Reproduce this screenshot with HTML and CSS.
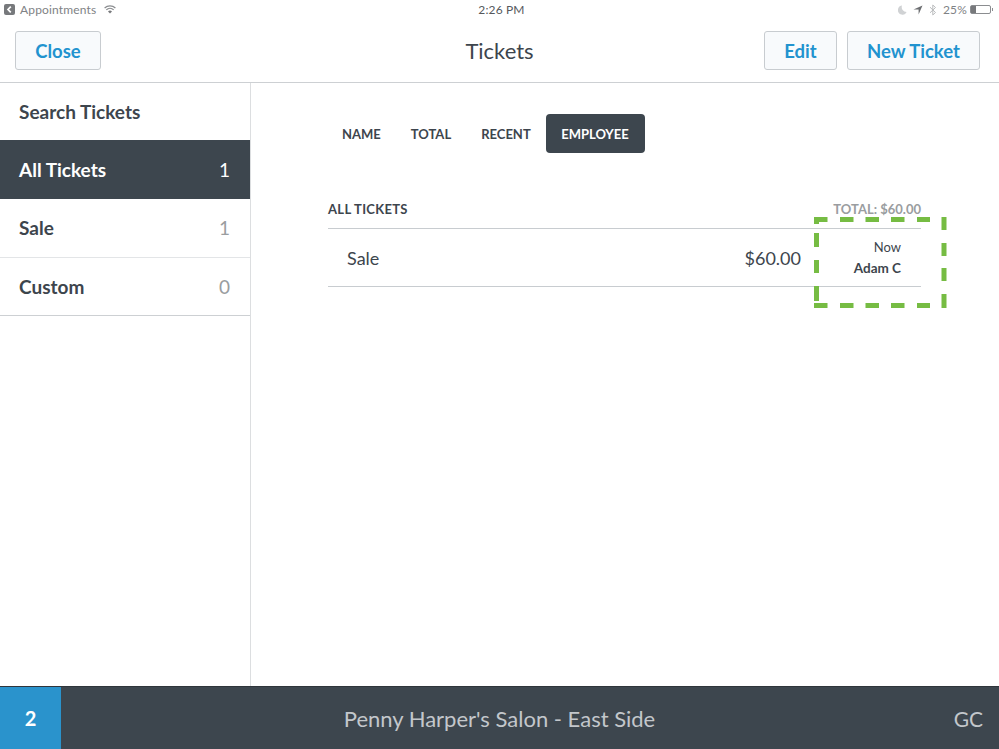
FILE: index.html

```html
<!DOCTYPE html>
<html lang="en">
<head>
<meta charset="UTF-8" />
<title>Tickets</title>
<link rel="stylesheet" href="styles.css">
</head>
<body>
<div class="app">

  <div class="status">
    <div class="status-left">
      <svg class="back-icon" width="11" height="11" viewBox="0 0 11 11"><rect width="11" height="11" rx="2" fill="#77797c"/><path d="M6.8 2.6 4 5.5l2.8 2.9" fill="none" stroke="#fff" stroke-width="1.7"/></svg>
      <span>Appointments</span>
      <svg class="wifi" width="12" height="9" viewBox="0 0 12 9"><path d="M.6 3a8 8 0 0 1 10.8 0M2.3 4.9a5.400 5.400 0 0 1 7.400 0" fill="none" stroke="#8b8d90" stroke-width="1.200"/><path d="M4 6.400a3 3 0 0 1 4 0L6 8.600z" fill="#77797c"/></svg>
    </div>
    <div class="status-time">2:26 PM</div>
    <div class="status-right">
      <svg width="9" height="10" viewBox="0 0 9 10"><path d="M4 .5a4.600 4.600 0 1 0 4.600 6.600A5 5 0 0 1 4 .5z" fill="#d0d2d4"/></svg>
      <svg width="10" height="10" viewBox="0 0 10 10"><path d="M9.500.5 5.600 9.400V4.400H.5z" fill="#6c6e71"/></svg>
      <svg width="8" height="12" viewBox="0 0 8 12"><path d="M1 3.200 6.500 8.500 3.800 11V1l2.700 2.500L1 8.800" fill="none" stroke="#b9bbbd" stroke-width="1"/></svg>
      <span>25%</span>
      <div class="battery"><div class="battery-level"></div></div>
    </div>
  </div>

  <header class="topbar">
    <button class="btn btn-close">Close</button>
    <h1>Tickets</h1>
    <div class="topbar-right">
      <button class="btn btn-edit">Edit</button>
      <button class="btn btn-new">New Ticket</button>
    </div>
  </header>

  <div class="main">
    <nav class="sidebar">
      <div class="side-row search">Search Tickets</div>
      <div class="side-row active">All Tickets <span>1</span></div>
      <div class="side-row">Sale <span>1</span></div>
      <div class="side-row last">Custom <span>0</span></div>
    </nav>

    <section class="content">
      <div class="tabs">
        <div class="tab">NAME</div>
        <div class="tab">TOTAL</div>
        <div class="tab">RECENT</div>
        <div class="tab selected">EMPLOYEE</div>
      </div>

      <div class="list-head">
        <span>ALL TICKETS</span>
        <span class="list-total">TOTAL: $60.00</span>
      </div>
      <div class="ticket">
        <div class="ticket-name">Sale</div>
        <div class="ticket-price">$60.00</div>
        <div class="ticket-meta">
          <div>Now</div>
          <div class="ticket-emp">Adam C</div>
        </div>
      </div>
    </section>
  </div>

  <footer class="bottom">
    <div class="count">2</div>
    <div class="salon">Penny Harper's Salon - East Side</div>
    <div class="initials">GC</div>
  </footer>

  <!-- green highlight drawn over the screenshot -->
  <svg class="highlight" width="134" height="92" viewBox="0 0 134 92">
    <g stroke="#76bc43" stroke-width="5" fill="none">
      <path d="M0 2.500H13.500M26 2.500H39.500M51.500 2.500H65M77 2.500H90.500M103 2.500H116"/>
      <path d="M0 88.500H13.500M26 88.500H39.500M51.500 88.500H65M77 88.500H90.500M103 88.500H116"/>
      <path d="M2.500 1V7M2.500 16V30M2.500 43V56M2.500 69V84"/>
      <path d="M130 0V13M130 26V39M130 51V64M130 77V91"/>
    </g>
  </svg>
</div>
</body>
</html>
```

FILE: styles.css

```css
* { box-sizing: border-box; }
html, body {
  margin: 0; padding: 0; height: 100%;
  background: #fff;
  color: #3d454d;
  font-family: "Lato", "Open Sans", sans-serif;
  overflow: hidden;
}

.app {
  position: relative;
  width: 999px;
  height: 749px;
  display: flex;
  flex-direction: column;
}

/* status bar */
.status {
  height: 19px;
  display: grid;
  grid-template-columns: 1fr auto 1fr;
  align-items: center;
  padding: 0 0 0 4px;
  font-size: 12px;
  letter-spacing: 0.15px;
  color: #808285;
}
.status-left {
  display: flex;
  align-items: center;
  gap: 5px;
}
.wifi { margin-left: 3px; }
.status-time { color: #55585c; }
.status-right {
  display: flex;
  align-items: center;
  justify-content: flex-end;
  gap: 6px;
}
.battery {
  width: 21px;
  height: 9px;
  border: 1px solid #8b8d90;
  border-radius: 2px;
  margin-right: 8px;
  margin-left: -3px;
  position: relative;
}
.battery-level {
  width: 5px;
  height: 100%;
  background: #77797c;
}
.battery::after {
  content: "";
  position: absolute;
  right: -3px; top: 2px;
  width: 1px; height: 3px;
  background: #8b8d90;
}

/* header */
.topbar {
  height: 64px;
  display: flex;
  align-items: center;
  justify-content: space-between;
  padding: 0 19px 0 15px;
  border-bottom: 1px solid #cdd0d3;
  position: relative;
}
.topbar h1 {
  position: absolute;
  left: 0; right: 0;
  top: 18px;
  margin: 0;
  text-align: center;
  font-size: 22px;
  font-weight: 400;
  color: #3d454d;
}
.topbar-right {
  display: flex;
  gap: 10px;
}
.btn {
  height: 39px;
  background: #f8fafc;
  border: 1px solid #c8ccd0;
  border-radius: 3px;
  color: #2293cf;
  font-family: inherit;
  font-size: 18.500px;
  font-weight: 700;
  padding: 0;
}
.btn-close { width: 86px; }
.btn-edit { width: 73px; }
.btn-new { width: 133px; }

.main {
  flex: 1;
  display: flex;
  min-height: 0;
}

/* left list */
.sidebar {
  width: 251px;
  border-right: 1px solid #dcdee0;
}
.side-row {
  height: 58.500px;
  display: flex;
  align-items: center;
  justify-content: space-between;
  padding: 0 20px 0 19px;
  font-size: 19px;
  font-weight: 700;
  border-bottom: 1px solid #e3e5e7;
}
.side-row.search {
  height: 57px;
  border-bottom: 0;
}
.side-row span {
  font-weight: 400;
  color: #9a9da0;
}
.side-row.active {
  height: 59px;
  background: #3d464e;
  color: #fff;
  border-bottom: 0;
}
.side-row.active span { color: #fff; }
.side-row.last { border-bottom-color: #cdd0d3; }

/* tickets */
.content {
  flex: 1;
  padding: 31px 0 0 77px;
}
.tabs {
  display: flex;
  height: 39px;
  margin-left: -1px;
}
.tab {
  display: flex;
  align-items: center;
  padding: 0 15px;
  font-size: 13px;
  font-weight: 700;
  color: #3d454d;
}
.tab.selected {
  padding: 0 16px 0 15.500px;
  background: #3d464e;
  color: #fff;
  border-radius: 4px;
}
.list-head {
  width: 593px;
  height: 38px;
  margin-top: 38px;
  display: flex;
  align-items: center;
  justify-content: space-between;
  font-size: 13px;
  font-weight: 700;
  border-bottom: 1px solid #c8ccd0;
  padding-bottom: 2px;
}
.list-head span:first-child { letter-spacing: 0.3px; }
.list-total { color: #9a9da0; }
.ticket {
  width: 593px;
  height: 58px;
  display: flex;
  align-items: center;
  padding: 0 20px 0 19px;
  border-bottom: 1px solid #c8ccd0;
}
.ticket-name {
  flex: 1;
  font-size: 18px;
}
.ticket-price {
  font-size: 18px;
}
.ticket-meta {
  width: 100px;
  text-align: right;
  font-size: 13px;
  line-height: 21px;
}
.ticket-emp {
  font-size: 13.500px;
  font-weight: 700;
}

/* bottom bar */
.bottom {
  height: 63px;
  background: #3d464e;
  border-top: 1px solid #2f353b;
  display: flex;
  align-items: center;
  position: relative;
  color: #c3c7cb;
}
.count {
  width: 61px;
  height: 100%;
  background: #2a93cc;
  color: #fff;
  font-size: 20px;
  font-weight: 700;
  display: flex;
  align-items: center;
  justify-content: center;
}
.salon {
  flex: 1;
  text-align: center;
  font-size: 22px;
  margin-right: 61px;
}
.initials {
  position: absolute;
  right: 16px;
  font-size: 21px;
}

.highlight {
  position: absolute;
  left: 814px;
  top: 217px;
}
```
